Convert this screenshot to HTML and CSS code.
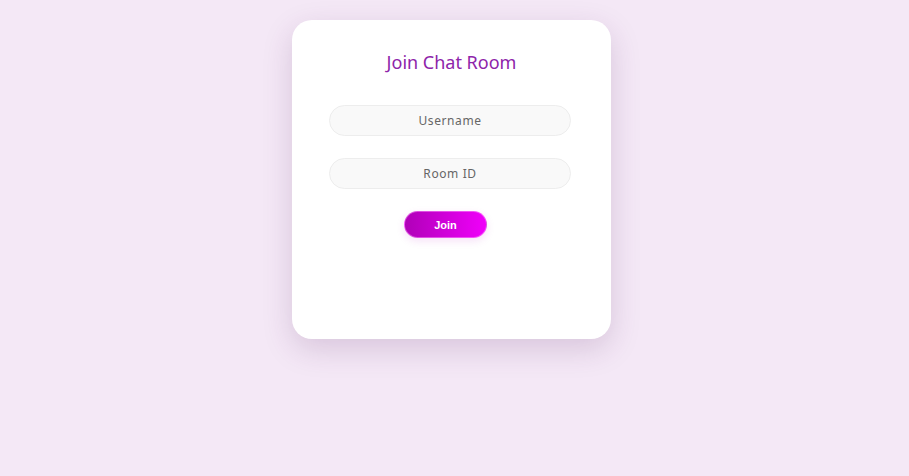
FILE: index.html
```html
<!DOCTYPE html>
<html>
<head>
<meta charset="utf-8">
<link rel="stylesheet" href="styles.css">
</head>
<body>
<div class="card">
  <h2 class="title">Join Chat Room</h2>
  <input class="field" type="text" placeholder="Username">
  <input class="field" type="text" placeholder="Room ID">
  <button class="join">Join</button>
</div>
</body>
</html>
```
FILE: styles.css
```css
html, body {
  margin: 0;
  padding: 0;
}
body {
  background: #f4e8f6;
  font-family: "Noto Sans", "Open Sans", sans-serif;
  min-height: 476px;
  display: flex;
  flex-direction: column;
  align-items: center;
  padding-top: 20px;
  box-sizing: border-box;
}
.card {
  width: 319px;
  height: 319px;
  box-sizing: border-box;
  background: #fff;
  border-radius: 20px;
  box-shadow: 0 10px 30px rgba(90, 40, 100, 0.18);
  display: flex;
  flex-direction: column;
  align-items: center;
  padding-top: 30px;
  margin-right: 6px;
}
.title {
  margin: 0;
  font-size: 18px;
  line-height: 24px;
  font-weight: 400;
  color: #8e24aa;
  margin-bottom: 31px;
}
.field {
  width: 242px;
  height: 31px;
  box-sizing: border-box;
  border: 1px solid #ededed;
  border-radius: 16px;
  background: #f9f9f9;
  text-align: center;
  font-family: inherit;
  font-size: 12px;
  letter-spacing: 0.6px;
  color: #555;
  margin-bottom: 22px;
  margin-right: 3px;
  outline: none;
}
.field::placeholder {
  color: #666;
}
.join {
  width: 83px;
  height: 27px;
  border: 1px solid rgba(255, 160, 255, 0.5);
  border-radius: 14px;
  background: linear-gradient(90deg, #b000b8, #f000fa);
  color: #fff;
  font-family: "Liberation Sans", Arial, sans-serif;
  font-weight: 700;
  font-size: 11px;
  box-shadow: 0 3px 8px rgba(180, 0, 190, 0.12);
  cursor: pointer;
  margin-right: 12px;
}
```
